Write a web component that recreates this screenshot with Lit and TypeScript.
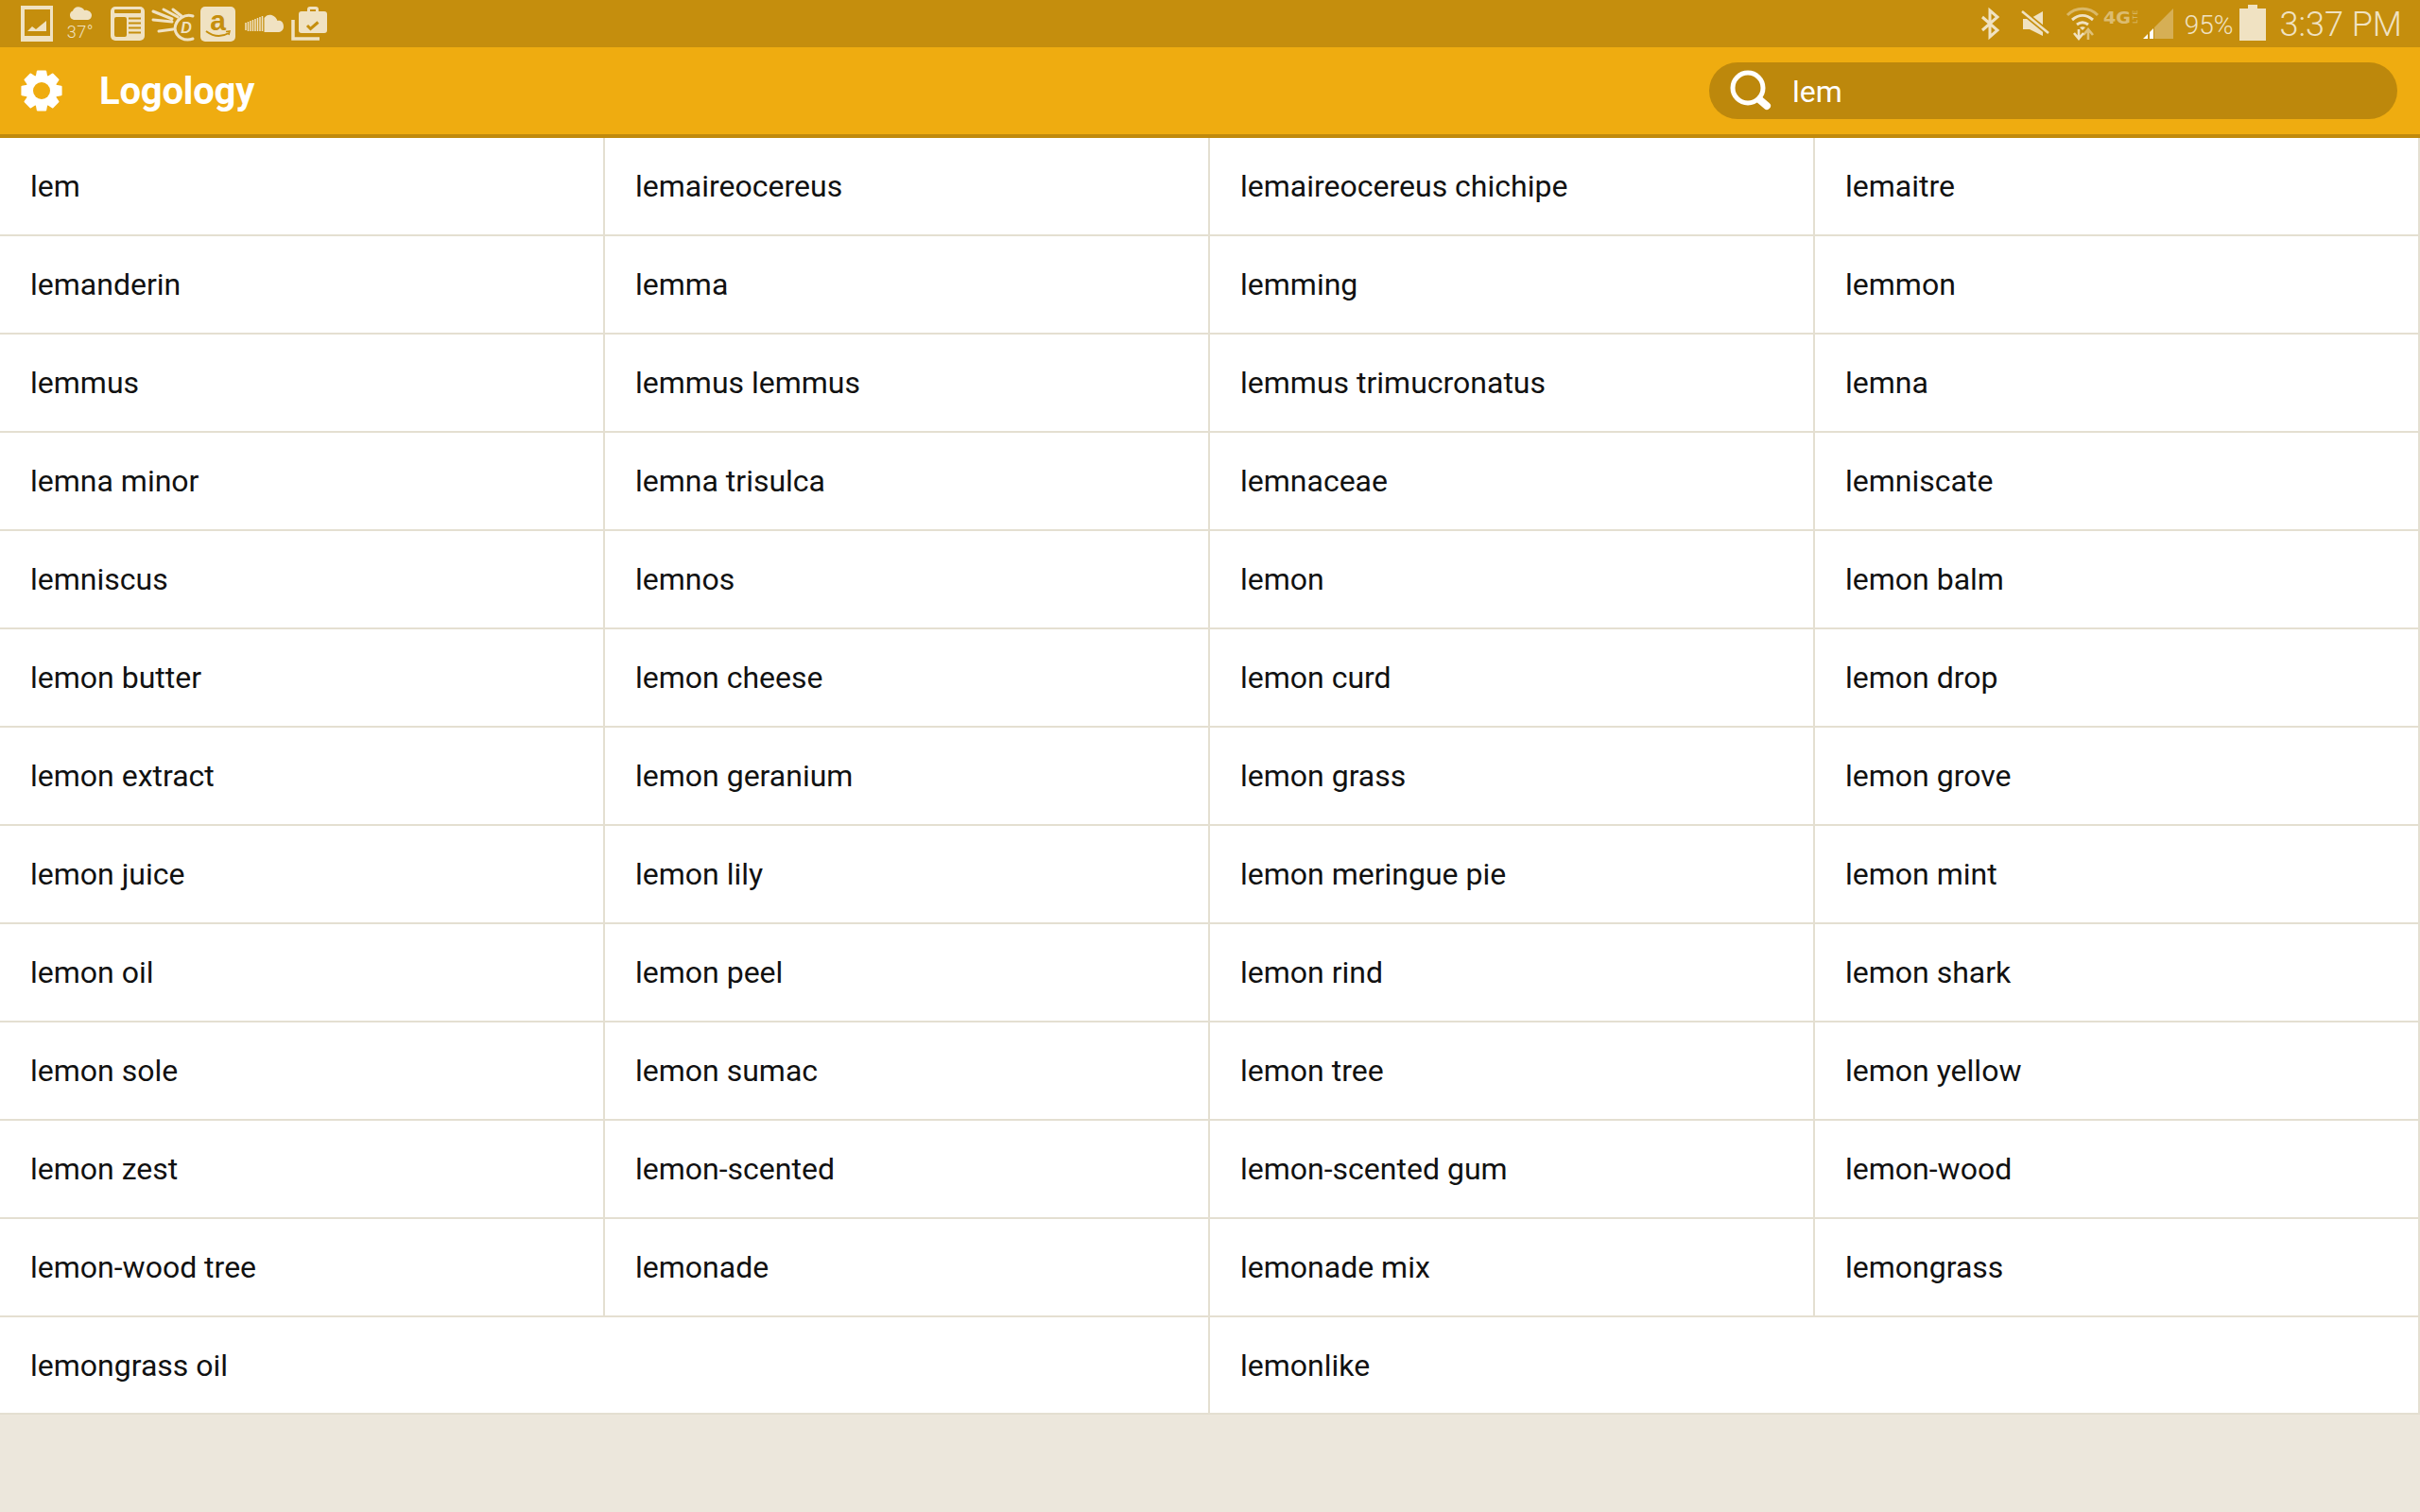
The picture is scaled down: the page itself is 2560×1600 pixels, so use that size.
import { LitElement, html, css, svg } from 'lit';
import { customElement } from 'lit/decorators.js';
import { classMap } from 'lit/directives/class-map.js';

const WORDS = [
  'lem', 'lemaireocereus', 'lemaireocereus chichipe', 'lemaitre',
  'lemanderin', 'lemma', 'lemming', 'lemmon',
  'lemmus', 'lemmus lemmus', 'lemmus trimucronatus', 'lemna',
  'lemna minor', 'lemna trisulca', 'lemnaceae', 'lemniscate',
  'lemniscus', 'lemnos', 'lemon', 'lemon balm',
  'lemon butter', 'lemon cheese', 'lemon curd', 'lemon drop',
  'lemon extract', 'lemon geranium', 'lemon grass', 'lemon grove',
  'lemon juice', 'lemon lily', 'lemon meringue pie', 'lemon mint',
  'lemon oil', 'lemon peel', 'lemon rind', 'lemon shark',
  'lemon sole', 'lemon sumac', 'lemon tree', 'lemon yellow',
  'lemon zest', 'lemon-scented', 'lemon-scented gum', 'lemon-wood',
  'lemon-wood tree', 'lemonade', 'lemonade mix', 'lemongrass',
  'lemongrass oil', 'lemonlike',
];

const INK = '#f0e2c2';
const BAR = '#c58e0d';

// 8 tooth cog, outer radius r1, root radius r2
function gearPath(cx: number, cy: number, r1: number, r2: number) {
  const pts: string[] = [];
  for (let i = 0; i < 8; i++) {
    const a = (i * Math.PI) / 4 - Math.PI / 2;
    const corners = [
      [r2, a - 0.33],
      [r1, a - 0.2],
      [r1, a + 0.2],
      [r2, a + 0.33],
    ];
    for (const [r, t] of corners) {
      pts.push(`${(cx + r * Math.cos(t)).toFixed(2)} ${(cy + r * Math.sin(t)).toFixed(2)}`);
    }
  }
  return `M${pts.join('L')}Z`;
}

const icons = {
  picture: svg`<svg width="34" height="38" viewBox="0 0 34 38">
    <path fill-rule="evenodd" d="M0 0h34v38H0zM4 4v28h27V4z" fill="${INK}"/>
    <path d="M7 27l5-5 4 3 11-9v11z" fill="${INK}"/>
  </svg>`,
  cloud: svg`<svg width="24" height="14" viewBox="0 0 24 14">
    <path d="M5 14a5 5 0 0 1-1-9.500C5 1 9-1 13 1c2 1 3 2 3 3 4-1 8 2 8 5s-2 5-5 5z" fill="${INK}"/>
  </svg>`,
  news: svg`<svg width="36" height="36" viewBox="0 0 36 36">
    <rect width="36" height="36" rx="5" fill="${INK}"/>
    <rect x="4" y="3" width="28" height="4" rx="1" fill="${BAR}"/>
    <rect x="4" y="11" width="13" height="21" rx="2" fill="${BAR}"/>
    <path d="M19 12.500h13M19 17.500h13M19 22.500h13M19 27.500h13" stroke="${BAR}" stroke-width="2"/>
  </svg>`,
  dictionary: svg`<svg width="44" height="36" viewBox="0 0 44 36">
    <g fill="none" stroke="${INK}" stroke-width="3" stroke-linecap="round">
      <path d="M1 5l20 8M12 3l15 8M22 3l9 7M1 14l20 2M7 26l15-2"/>
      <path d="M43 10C35 7 25 13 24 23c1 10 11 14 19 11"/>
    </g>
    <text x="36" y="28" text-anchor="middle" font-family="Liberation Sans" font-size="16" font-weight="700" font-style="italic" fill="${INK}">D</text>
  </svg>`,
  amazon: svg`<svg width="37" height="37" viewBox="0 0 37 37">
    <rect width="37" height="37" rx="5" fill="${INK}"/>
    <text x="18.500" y="25" text-anchor="middle" font-family="Liberation Sans" font-size="30" font-weight="700" fill="${BAR}">a</text>
    <path d="M6 26q12 9 24 2" fill="none" stroke="${BAR}" stroke-width="2"/>
    <path d="M27 26.500l4-.5-1 4" fill="none" stroke="${BAR}" stroke-width="1.500"/>
  </svg>`,
  soundcloud: svg`<svg width="41" height="20" viewBox="0 0 41 20">
    <path d="M1 9v8M3.500 8v10M6 7v11M8.500 6v12M11 5v13M13.500 4v14M16 3v15M18.500 2v16" stroke="${INK}" stroke-width="1.500"/>
    <path d="M20.500 19V4c2-3 5-4 8-3 3 1 5 3 6 6 4-1 6.500 2 6.500 6s-3 6-6 6z" fill="${INK}"/>
  </svg>`,
  briefcase: svg`<svg width="38" height="36" viewBox="0 0 38 36">
    <path d="M2 14v20h28" fill="none" stroke="${INK}" stroke-width="3.500"/>
    <path d="M8 8c0-2 1-3 3-3h6V3c0-2 1-3 3-3h6c2 0 3 1 3 3v2h6c2 0 3 1 3 3v17c0 2-1 3-3 3H11c-2 0-3-1-3-3z" fill="${INK}"/>
    <rect x="20" y="3" width="6" height="2" fill="${BAR}"/>
    <path d="M17 20l3.500 3.500 8-7" fill="none" stroke="${BAR}" stroke-width="3"/>
  </svg>`,
  bluetooth: svg`<svg width="19" height="30" viewBox="0 0 19 30">
    <path d="M1 8l16 14-8 7V1l8 7L1 22" fill="none" stroke="${INK}" stroke-width="3"/>
  </svg>`,
  mute: svg`<svg width="30" height="28" viewBox="0 0 30 28">
    <path d="M2 9h7l14-8v26L9 20H2z" fill="${INK}"/>
    <path d="M1 1l28 23" stroke="${BAR}" stroke-width="6"/>
    <path d="M1 1l28 23" stroke="${INK}" stroke-width="2.600"/>
  </svg>`,
  wifi: svg`<svg width="34" height="36" viewBox="0 0 34 36">
    <g fill="none" stroke-width="3">
      <path d="M1 9c9-9 23-9 32 0" stroke="${INK}" opacity=".5"/>
      <path d="M6 14c7-6 15-6 22 0" stroke="${INK}"/>
      <path d="M11 19c4-3 8-3 12 0" stroke="${INK}"/>
    </g>
    <path d="M14 22c2-1 4-1 6 0l-3 3z" fill="${INK}"/>
    <path d="M13 24v8M8 28l5 6 5-6" fill="none" stroke="${INK}" stroke-width="2.600"/>
    <path d="M23 35v-9M18 30l5-6 5 6" fill="none" stroke="${INK}" stroke-width="2.600" opacity=".6"/>
  </svg>`,
  lte: svg`<svg width="38" height="18" viewBox="0 0 38 18">
    <text x="0" y="15" font-family="DejaVu Sans" font-weight="700" font-size="18" fill="${INK}" opacity=".55" textLength="29" lengthAdjust="spacingAndGlyphs">4G</text>
    <text transform="translate(36 15) rotate(-90)" font-family="Roboto" font-size="8" fill="${INK}" opacity=".55" textLength="14">LTE</text>
  </svg>`,
  signal: svg`<svg width="32" height="32" viewBox="0 0 32 32">
    <path d="M32 0v32H12V20z" fill="${INK}" opacity=".4"/>
    <path d="M0 32l5-5v5zM7 25l4-4v11H7z" fill="#fff"/>
  </svg>`,
  battery: svg`<svg width="28" height="38" viewBox="0 0 28 38">
    <path d="M9 0h10v4h9v34H0V4h9z" fill="${INK}"/>
  </svg>`,
  search: svg`<svg width="44" height="44" viewBox="0 0 44 44">
    <circle cx="19" cy="19" r="16" fill="none" stroke="#fff" stroke-width="5"/>
    <path d="M32 32l7 6" stroke="#fff" stroke-width="8" stroke-linecap="round"/>
  </svg>`,
};

@customElement('app-root')
export class AppRoot extends LitElement {
  static styles = css`
    :host {
      display: block;
      min-height: 1600px;
      background: #ece7dc;
      font-family: Roboto, sans-serif;
      color: #111;
    }

    svg {
      display: block;
      flex: none;
      overflow: visible;
    }

    .status {
      display: flex;
      align-items: center;
      justify-content: space-between;
      height: 50px;
      padding: 0 19px 0 22px;
      background: #c58e0d;
      color: #f0e2c2;
    }

    .group {
      display: flex;
      align-items: center;
    }

    .weather {
      display: flex;
      flex-direction: column;
      align-items: center;
      gap: 4px;
      width: 32px;
      margin: 0 16px 0 13px;
    }

    .weather span {
      font-size: 18px;
      font-weight: 300;
      line-height: 18px;
      letter-spacing: 0.5px;
      white-space: nowrap;
    }

    .ml4 { margin-left: 4px; }
    .ml5 { margin-left: 5px; }
    .ml7 { margin-left: 7px; }
    .ml8 { margin-left: 8px; }
    .ml10 { margin-left: 10px; }
    .ml18 { margin-left: 18px; }
    .ml23 { margin-left: 23px; }

    .raised {
      margin-bottom: 12px;
    }

    .battery-text {
      margin: 2px 7px 0 12px;
      font-size: 28px;
      font-weight: 300;
    }

    .battery {
      margin-bottom: 2px;
    }

    .time {
      margin: 2px 0 0 14px;
      font-size: 36px;
      font-weight: 300;
      white-space: nowrap;
    }

    .toolbar {
      display: flex;
      align-items: center;
      height: 92px;
      padding: 0 24px 0 22px;
      border-bottom: 4px solid #c08a0c;
      background: #efac10;
      color: #fff;
    }

    .title {
      flex: 1;
      margin-left: 39px;
      font-size: 40px;
      font-weight: 700;
      letter-spacing: -0.2px;
    }

    .search {
      display: flex;
      align-items: center;
      width: 728px;
      height: 60px;
      padding-left: 22px;
      border-radius: 30px;
      background: #bd880c;
      box-sizing: border-box;
      font-size: 32px;
    }

    .search span {
      margin: 2px 0 0 22px;
    }

    .grid {
      display: grid;
      grid-template-columns: repeat(4, 640px);
      background: #fff;
    }

    .cell {
      display: flex;
      align-items: center;
      height: 104px;
      padding-left: 32px;
      border-right: 2px solid #e4dfd1;
      border-bottom: 2px solid #e4dfd1;
      box-sizing: border-box;
      font-size: 32px;
    }

    .wide {
      grid-column: span 2;
      height: 103px;
      padding-top: 1px;
    }
  `;

  render() {
    return html`
      <div class="status">
        <div class="group">
          ${icons.picture}
          <div class="weather">
            ${icons.cloud}
            <span>37°</span>
          </div>
          ${icons.news}
          <span class="ml8">${icons.dictionary}</span>
          <span class="ml7">${icons.amazon}</span>
          <span class="ml10">${icons.soundcloud}</span>
          <span class="ml8">${icons.briefcase}</span>
        </div>
        <div class="group">
          ${icons.bluetooth}
          <span class="ml23">${icons.mute}</span>
          <span class="ml18">${icons.wifi}</span>
          <span class="ml5 raised">${icons.lte}</span>
          <span class="ml4">${icons.signal}</span>
          <span class="battery-text">95%</span>
          <span class="battery">${icons.battery}</span>
          <span class="time">3:37 PM</span>
        </div>
      </div>
      <div class="toolbar">
        <svg width="44" height="44" viewBox="0 0 44 44">
          <path d="${gearPath(22, 22, 21, 16)}" fill="#fff" stroke="#fff" stroke-width="2" stroke-linejoin="round"/>
          <circle cx="22" cy="22" r="9" fill="#efac10"/>
        </svg>
        <div class="title">Logology</div>
        <div class="search">${icons.search}<span>lem</span></div>
      </div>
      <div class="grid">
        ${WORDS.map((word, i) => html`
          <div class=${classMap({ cell: true, wide: i >= 48 })}>${word}</div>
        `)}
      </div>
    `;
  }
}

declare global {
  interface HTMLElementTagNameMap {
    'app-root': AppRoot;
  }
}
